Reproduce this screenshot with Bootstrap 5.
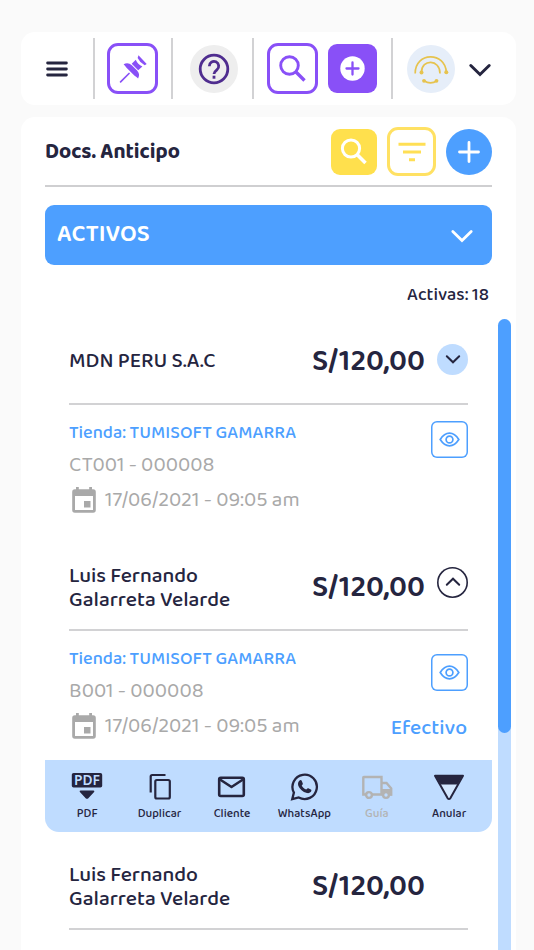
<!DOCTYPE html>
<html lang="es">
<head>
<meta charset="utf-8">
<meta name="viewport" content="width=device-width, initial-scale=1">
<title>Docs. Anticipo</title>
<link href="https://cdn.jsdelivr.net/npm/bootstrap@5.3.0/dist/css/bootstrap.min.css" rel="stylesheet">
<style>
:root{--ink:#25253f;--blue:#4d9fff;--sky:#bfdcff;--violet:#8950f7;--sun:#ffe04d;--line:#d2d2d4;--mute:#a9a9a9}
body{font-family:"Baloo 2","Noto Sans",sans-serif;color:var(--ink);background:#fafafa;height:950px;overflow:hidden}
svg{display:block}
.app-shell{width:495px;margin-left:21px;height:950px;padding-top:32px}
.top-bar{height:73px;border-radius:14px;padding:6px 0}
.seg{border-right:2px solid var(--line)}
.seg:last-child{border:0}
.seg-menu{width:73.5px}.seg-pin{width:78.5px}.seg-help{width:81px;padding-left:2px}.seg-find{width:139px;gap:10px;padding-right:1px}
.seg-user{padding-left:14px;gap:13px}
.sq{width:51px;height:51px;border-radius:11px;border:3px solid var(--violet)}
.sq-solid{width:49px;height:49px;border-radius:9px;background:var(--violet)}
.disc{width:48px;height:48px;background:#eee}
.panel{margin-top:12px;height:833px;border-radius:14px 14px 0 0;padding:10px 24px 0}
.title-row{height:60px;border-bottom:2px solid #cfcfd1;padding-bottom:9px;gap:10px}
.title-row h1{font-size:21.1px;padding-top:3px}
.tool{width:46px;height:46px;border-radius:9px}
.tool-sun{background:var(--sun)}
.tool-line{width:49px;height:49px;border-radius:11px;border:3px solid #ffe163}
.tool-blue{background:var(--blue)}
.group-head{margin-top:18px;height:60px;border-radius:9px;background:var(--blue);padding:0 18px 0 12px;font-size:24.1px}
.count{height:54px;padding:16px 3px 0 0;font-size:18.1px;font-weight:500;line-height:27px}
.list-row{margin-right:-19px;height:631px;overflow:hidden}
.list-col{width:447px}
.track{width:12.5px;margin-left:6px;background:var(--sky);border-radius:7px 7px 0 0}
.thumb{height:414px;border-radius:7px;background:var(--blue)}
.doc{padding:0 24px;height:226px}
.doc.open{height:215px}
.doc-head{height:86px;border-bottom:2px solid var(--line)}
.doc-name{font-size:21.15px;font-weight:500;padding-top:2px}
.doc-name span{display:block;line-height:24px}
.amount{font-size:30.2px;font-weight:600;line-height:40px;width:125px;padding-top:1px}
.round{width:31px;height:31px;margin-bottom:4px}
.round-sky{background:var(--sky)}
.round-line{box-shadow:inset 0 0 0 1.6px var(--ink);margin-bottom:10px}
.doc-body{padding-top:12px}
.shop{color:var(--blue);font-size:18.15px;font-weight:500;line-height:32px}
.soft{color:var(--mute);font-size:21.1px;line-height:33px}
.stamp{gap:7px;line-height:36px}
.eye{width:37px;height:37px;box-shadow:inset 0 0 0 1.5px var(--blue);border-radius:6px}
.side{padding-top:4px}
.side-low{padding-top:11px}
.pay{color:var(--blue);font-size:21.1px;font-weight:500;line-height:35px;margin-bottom:-2px;padding-right:1px}
.actions{height:72px;background:var(--sky);border-radius:0 0 14px 14px;padding:0 6px}
.act{width:72.4px;font-size:11.95px;font-weight:500;line-height:14px;gap:6px;padding-top:12px}
.off{color:#b3b3b3}
</style>
</head>
<body>
<div class="app-shell">
  <header class="top-bar bg-white d-flex">
    <div class="seg seg-menu d-flex align-items-center justify-content-center">
      <svg width="22" height="18" viewBox="0 0 22 18" stroke="#25253f" stroke-width="2.8" stroke-linecap="round"><path d="M1.6 3h18.8M1.6 9h18.8M1.6 15h18.8"/></svg>
    </div>
    <div class="seg seg-pin d-flex align-items-center justify-content-center">
      <div class="sq d-flex align-items-center justify-content-center">
        <svg width="28" height="28" viewBox="0 0 28 28" fill="#8950f7"><path d="M19.5.3l8.200 8.600-2 1.300Q20.500 7 18.600 2.900z"/><path d="M16.800 4.800q1.800 4.600 6.600 6.800l-4.200 3.700-6.500-6.500z"/><path d="M4.600 9.200q4.600-2.300 8.200 1.100l5.300 5.200q3.400 3.700 1 8.100-1.500-1.600-3.800-3L7.500 12.800Q6.300 10.800 4.600 9.200z"/><path d="M1.600 26.800L10 18.500" stroke="#8950f7" stroke-width="1.700" stroke-linecap="round"/></svg>
      </div>
    </div>
    <div class="seg seg-help d-flex align-items-center justify-content-center">
      <div class="disc rounded-circle d-flex align-items-center justify-content-center">
        <svg width="32" height="32" viewBox="0 0 32 32" fill="none" stroke="#4f2d8f" stroke-width="2.8"><circle cx="16" cy="16" r="13.8"/><path d="M11.3 13.200a4.700 4.700 0 1 1 7.700 3.500c-1.900 1.500-3 2.200-3 4.200"/><path d="M16 22.700v3"/></svg>
      </div>
    </div>
    <div class="seg seg-find d-flex align-items-center justify-content-center">
      <div class="sq d-flex align-items-center justify-content-center">
        <svg width="28" height="28" viewBox="0 0 28 28" fill="none" stroke="#8950f7"><circle cx="10.500" cy="10.500" r="8.800" stroke-width="2.900"/><path d="M17 17l8.500 8.500" stroke-width="3.400"/></svg>
      </div>
      <div class="sq-solid d-flex align-items-center justify-content-center">
        <svg width="25" height="25" viewBox="0 0 25 25"><circle cx="12.500" cy="12.500" r="12.200" fill="#fff"/><path d="M12.500 6.500v12M6.500 12.500h12" stroke="#8950f7" stroke-width="2.300" stroke-linecap="round"/></svg>
      </div>
    </div>
    <div class="seg seg-user d-flex align-items-center">
      <svg width="48" height="48" viewBox="0 0 48 48" fill="none" stroke="#e6c34e" stroke-width="1.700"><circle cx="24" cy="24" r="24" fill="#e6eef9" stroke="none"/><path d="M8.200 28.500C8 6.500 38.500 6.500 39.300 27.300"/><path d="M14.500 27.300c0-13.500 18.500-13.500 18.500 1.200"/><path d="M17 35.800q6.500 4.200 13 0"/><g fill="#e6c34e" stroke="none"><circle cx="39.300" cy="27.300" r="2"/><circle cx="14.500" cy="27.500" r="2"/><circle cx="17" cy="35.800" r="1.900"/><circle cx="29.500" cy="35.800" r="1.900"/></g></svg>
      <svg width="24" height="16" viewBox="0 0 24 16" fill="none" stroke="#25253f" stroke-width="3" stroke-linecap="round"><path d="M2.800 4.500L12 13.500l9.200-9"/></svg>
    </div>
  </header>

  <main class="panel bg-white">
    <div class="title-row d-flex align-items-center">
      <h1 class="fw-bold m-0 me-auto">Docs. Anticipo</h1>
      <div class="tool tool-sun d-flex align-items-center justify-content-center">
        <svg width="28" height="28" viewBox="0 0 28 28" fill="none" stroke="#fff"><circle cx="11" cy="10.500" r="8.600" stroke-width="3"/><path d="M17.500 17l8 8" stroke-width="3.600"/></svg>
      </div>
      <div class="tool-line d-flex align-items-center justify-content-center">
        <svg width="28" height="20" viewBox="0 0 28 20" stroke="#ffdf55" stroke-width="3"><path d="M.5 2.200h27M5 10h18M11 17.700h6"/></svg>
      </div>
      <div class="tool tool-blue rounded-circle d-flex align-items-center justify-content-center">
        <svg width="22" height="22" viewBox="0 0 22 22" stroke="#fff" stroke-width="2.800" stroke-linecap="round"><path d="M11 1.500v19M1.500 11h19"/></svg>
      </div>
    </div>

    <div class="group-head text-white fw-semibold d-flex align-items-center justify-content-between">
      <span>ACTIVOS</span>
      <svg width="24" height="16" viewBox="0 0 24 16" fill="none" stroke="#fff" stroke-width="2.800" stroke-linecap="round"><path d="M2.800 4.500L12 13.500l9.200-9"/></svg>
    </div>
    <div class="count text-end">Activas: 18</div>

    <div class="list-row d-flex">
      <div class="list-col">
        <article class="doc">
          <div class="doc-head d-flex align-items-center">
            <div class="doc-name me-auto">MDN PERU S.A.C</div>
            <div class="amount">S/120,00</div>
            <div class="round round-sky rounded-circle d-flex align-items-center justify-content-center"><svg width="16" height="10" viewBox="0 0 16 10" fill="none" stroke="#25253f" stroke-width="2" stroke-linecap="round"><path d="M1.800 2.300L8 8.300l6.200-6"/></svg></div>
          </div>
          <div class="doc-body d-flex justify-content-between">
            <div>
              <div class="shop">Tienda: TUMISOFT GAMARRA</div>
              <div class="soft">CT001 - 000008</div>
              <div class="soft stamp d-flex align-items-center"><svg width="29" height="26" viewBox="0 0 29 26"><path fill="#a9a9a9" fill-rule="evenodd" d="M7 0h2.800v2.300h10.400V0H23v2.300h1.200a2.600 2.600 0 0 1 2.600 2.600v18.200a2.600 2.600 0 0 1-2.600 2.600H5.800a2.600 2.600 0 0 1-2.600-2.600V4.900a2.600 2.600 0 0 1 2.600-2.600H7zM6 9v14h18V9zm9 5h6.500v6.500H15z"/></svg><span>17/06/2021 - 09:05 am</span></div>
            </div>
            <div class="side"><div class="eye d-flex align-items-center justify-content-center"><svg width="21" height="15" viewBox="0 0 21 15" fill="none" stroke="#4d9fff" stroke-width="1.700"><path d="M1.200 7.500Q5.200 1.200 10.500 1.200t9.300 6.300Q15.800 13.800 10.500 13.800T1.200 7.500z"/><circle cx="10.500" cy="7.500" r="3.400"/></svg></div></div>
          </div>
        </article>

        <article class="doc open">
          <div class="doc-head d-flex align-items-center">
            <div class="doc-name me-auto"><span>Luis Fernando</span><span>Galarreta Velarde</span></div>
            <div class="amount">S/120,00</div>
            <div class="round round-line rounded-circle d-flex align-items-center justify-content-center"><svg width="16" height="10" viewBox="0 0 16 10" fill="none" stroke="#25253f" stroke-width="2" stroke-linecap="round"><path d="M1.800 7.700L8 1.700l6.200 6"/></svg></div>
          </div>
          <div class="doc-body d-flex justify-content-between">
            <div>
              <div class="shop">Tienda: TUMISOFT GAMARRA</div>
              <div class="soft">B001 - 000008</div>
              <div class="soft stamp d-flex align-items-center"><svg width="29" height="26" viewBox="0 0 29 26"><path fill="#a9a9a9" fill-rule="evenodd" d="M7 0h2.800v2.300h10.400V0H23v2.300h1.200a2.600 2.600 0 0 1 2.600 2.600v18.200a2.600 2.600 0 0 1-2.600 2.600H5.800a2.600 2.600 0 0 1-2.600-2.600V4.900a2.600 2.600 0 0 1 2.600-2.600H7zM6 9v14h18V9zm9 5h6.500v6.500H15z"/></svg><span>17/06/2021 - 09:05 am</span></div>
            </div>
            <div class="side side-low d-flex flex-column align-items-end justify-content-between"><div class="eye d-flex align-items-center justify-content-center"><svg width="21" height="15" viewBox="0 0 21 15" fill="none" stroke="#4d9fff" stroke-width="1.700"><path d="M1.200 7.500Q5.200 1.200 10.500 1.200t9.300 6.300Q15.800 13.800 10.500 13.800T1.200 7.500z"/><circle cx="10.500" cy="7.500" r="3.400"/></svg></div><div class="pay">Efectivo</div></div>
          </div>
        </article>

        <div class="actions d-flex">
          <div class="act d-flex flex-column align-items-center">
            <svg width="32" height="29" viewBox="0 0 32 29" fill="#25253f"><rect x=".8" y="1" width="30.400" height="14.500" rx="1.800"/><text x="16" y="13.200" text-anchor="middle" font-family="Noto Sans, sans-serif" font-size="13.800" font-weight="600" fill="#bfdcff">PDF</text><path d="M9.500 18.500h13q1.500.2.600 1.400l-6 6.500q-1.100.9-2.200 0l-6-6.500q-.9-1.200.6-1.400z"/></svg>
            <span>PDF</span>
          </div>
          <div class="act d-flex flex-column align-items-center">
            <svg width="24" height="29" viewBox="0 0 24 29" fill="none" stroke="#25253f" stroke-width="2.200"><path d="M2.700 20.500V4.500q0-1.500 1.500-1.500H17.500"/><rect x="7.300" y="8" width="14.500" height="18.500" rx="1.500"/></svg>
            <span>Duplicar</span>
          </div>
          <div class="act d-flex flex-column align-items-center">
            <svg width="29" height="29" viewBox="0 0 29 29" fill="none" stroke="#25253f" stroke-width="2.600" stroke-linejoin="round"><rect x="2.200" y="5.700" width="24.600" height="18.300" rx="1.500"/><path d="M3 7.500l11.500 7.500L26 7.500"/></svg>
            <span>Cliente</span>
          </div>
          <div class="act d-flex flex-column align-items-center">
            <svg width="29" height="29" viewBox="0 0 29 29" fill="none" stroke="#25253f" stroke-width="2.300"><path d="M2.200 27.200l1.700-6.600A12.200 12.200 0 1 1 8.700 25.500z"/><path fill="#25253f" stroke="none" d="M9.300 8.800c.9-1 2-.9 2.400 0l1.100 2.600c.2.700-.3 1.100-1.100 2 1.100 2.100 2.700 3.400 4.600 4.200.9-1 1.300-1.600 2-1.300l2.500 1.200c.8.400.7 1 .4 1.800-.6 1.500-2.700 2.200-4.300 1.700-4.300-1.200-7-3.900-8.500-7.100-.8-2.100-.3-3.900.9-5.100z"/></svg>
            <span>WhatsApp</span>
          </div>
          <div class="act off d-flex flex-column align-items-center">
            <svg width="32" height="29" viewBox="0 0 32 29" fill="none" stroke="#b3b3b3" stroke-width="2.400"><path d="M5 22.500H2.300V5.500q0-.5.500-.5H20.500v17.500H11"/><path d="M21 11h4.500l4.700 5.500v6H28"/><path fill="#b3b3b3" stroke="none" d="M20.500 17h10.500v6.500H20.500z"/><g fill="#bfdcff"><circle cx="8" cy="23" r="2.900"/><circle cx="25" cy="23" r="2.900"/></g></svg>
            <span>Guía</span>
          </div>
          <div class="act d-flex flex-column align-items-center">
            <svg width="32" height="29" viewBox="0 0 32 29"><path d="M2 3.800h28L17.300 26.300q-1.300 1.500-2.600 0z" fill="#d3e7ff" stroke="#25253f" stroke-width="2" stroke-linejoin="round"/><path d="M2 3.300h28l-5.600 9.200H7.600z" fill="#25253f"/></svg>
            <span>Anular</span>
          </div>
        </div>

        <article class="doc pt-2">
          <div class="doc-head mt-1 d-flex align-items-center">
            <div class="doc-name me-auto"><span>Luis Fernando</span><span>Galarreta Velarde</span></div>
            <div class="amount">S/120,00</div>
            <div class="round"></div>
          </div>
        </article>
      </div>
      <div class="track"><div class="thumb"></div></div>
    </div>
  </main>
</div>
<script src="https://cdn.jsdelivr.net/npm/bootstrap@5.3.0/dist/js/bootstrap.bundle.min.js"></script>
</body>
</html>
